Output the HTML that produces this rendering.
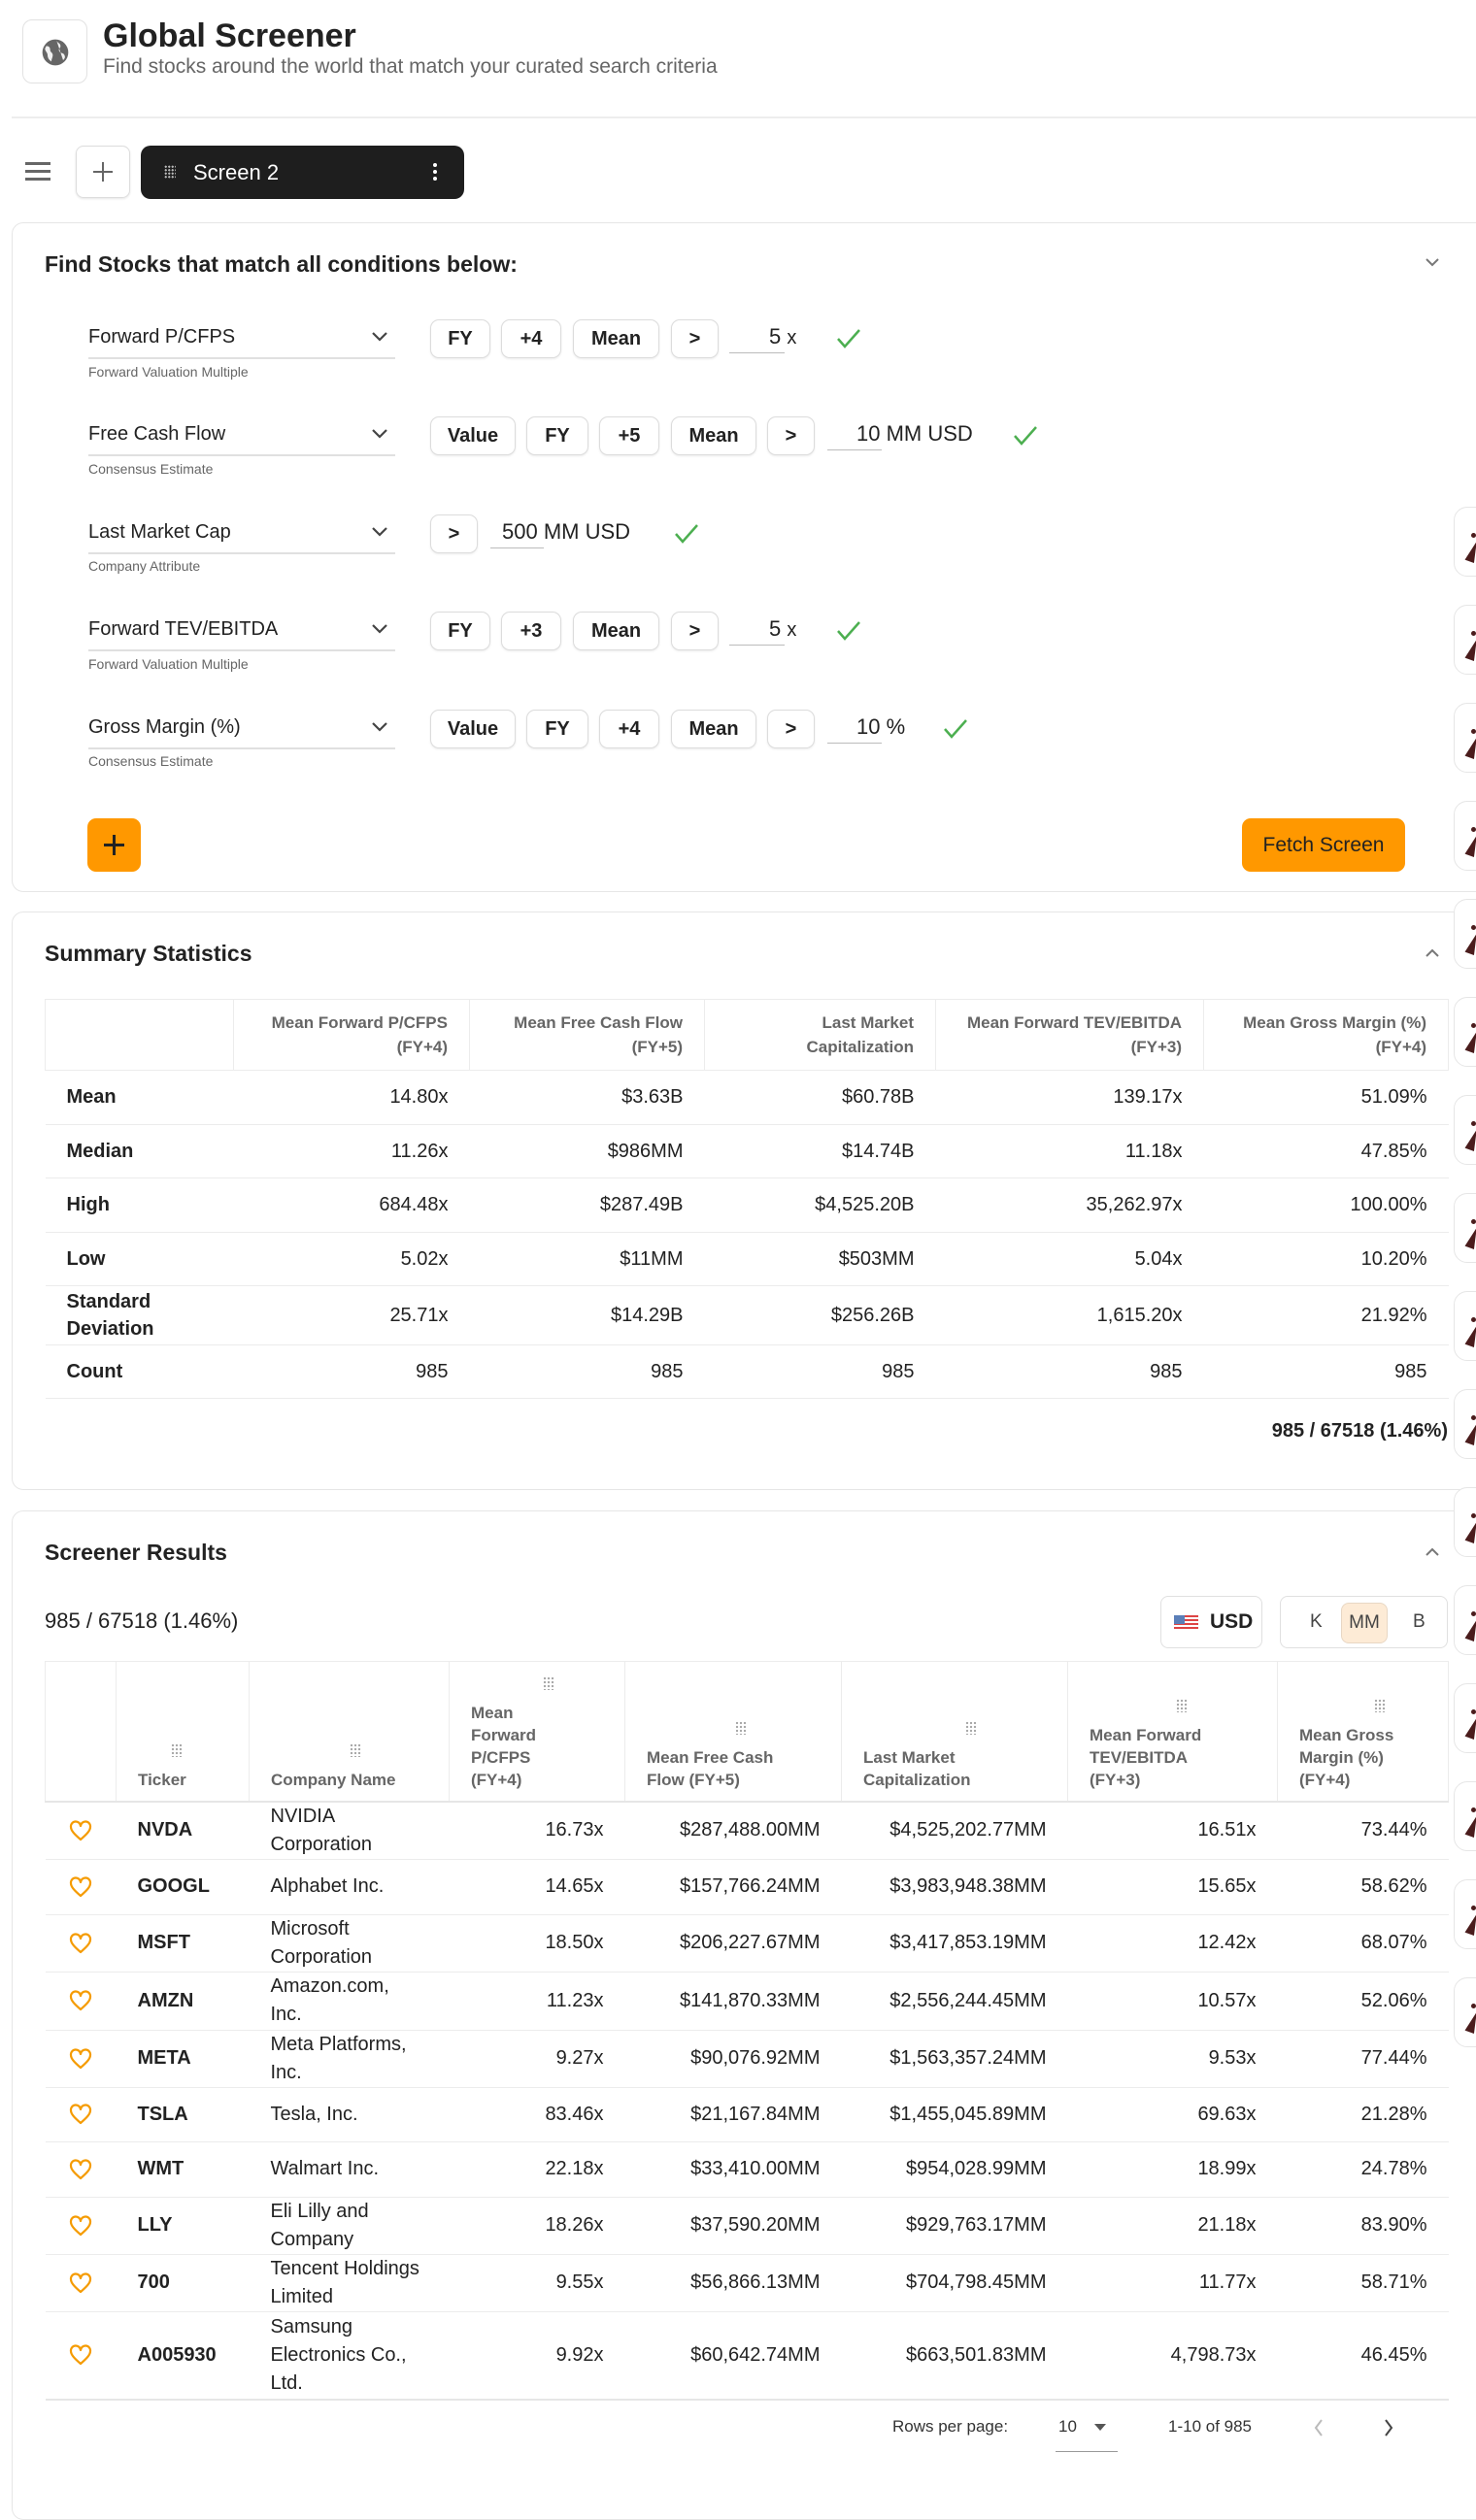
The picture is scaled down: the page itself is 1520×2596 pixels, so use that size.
<!DOCTYPE html>
<html><head><meta charset="utf-8">
<style>
*{box-sizing:border-box;margin:0;padding:0}
body{width:1520px;height:2560px;overflow:hidden;background:#fff;font-family:"Liberation Sans",Arial,sans-serif;color:#222;position:relative}
.a{position:absolute}
.card{position:absolute;left:12px;width:1540px;border:1px solid #e6e6e6;border-radius:12px;background:#fff}
.h2{position:absolute;left:46px;font-size:23px;font-weight:700;color:#222}
.chip{position:absolute;height:40px;line-height:38px;border:1px solid #dcdcdc;border-radius:9px;text-align:center;font-size:20px;font-weight:700;color:#222;background:#fff;box-shadow:0 1px 2px rgba(0,0,0,.08)}
.sel{position:absolute;left:91px;width:316px;border-bottom:2px solid #e0e0e0;height:34px;font-size:20px;color:#222}
.sel svg{position:absolute;right:6px;top:4px}
.cap{position:absolute;left:91px;font-size:14px;color:#666}
.ul{position:absolute;border-bottom:1px solid #bbb}
.val{position:absolute;font-size:22px;color:#222}
.chk{position:absolute}
table{border-collapse:collapse;position:absolute;table-layout:fixed}
.st td{font-size:20px;text-align:right;padding-right:22px;border-top:1px solid #ececec;color:#222}
.st td:first-child{text-align:left;padding-left:22px;font-weight:700}
.st th{font-size:17px;color:#666;font-weight:700;text-align:right;padding-right:22px;line-height:25px;border-left:1px solid #ececec;vertical-align:middle}
.rt td{font-size:20px;text-align:right;padding-right:22px;border-top:1px solid #ececec;color:#222}
.rt th{font-size:17px;color:#666;font-weight:700;text-align:left;padding-left:22px;line-height:23px;border-left:1px solid #ececec;vertical-align:bottom;padding-bottom:10px;position:relative}
.rt th:first-child{border-left:none}
.rt td.t{text-align:left;padding-left:22px;font-weight:700}
.rt td.c{text-align:left;padding-left:22px;line-height:29px}
.rt td.h{text-align:center;padding:0}
.rt td.h svg{display:block;margin:0 auto}
.g{display:block;width:12px;height:14px;margin:0 0 12px 0;background-image:radial-gradient(#aaa 1.1px,transparent 1.3px);background-size:4px 4px}
.side{position:absolute;left:1497px;width:40px;height:72px;border:1px solid #e6e6e6;border-radius:14px;background:#fff}
.side:after{content:"";position:absolute;left:14px;top:34px;width:0;height:0;border-left:5px solid transparent;border-right:5px solid transparent;border-bottom:22px solid #4a1c1c;transform:rotate(20deg)}
.side:before{content:"";position:absolute;left:17px;top:26px;width:5px;height:5px;border-radius:50%;background:#4a1c1c}
</style></head><body>

<!-- header -->
<div class="a" style="left:23px;top:20px;width:67px;height:66px;border:1px solid #e2e2e2;border-radius:10px">
<svg class="a" style="left:17px;top:17px" width="32" height="32" viewBox="0 0 24 24"><circle cx="12" cy="12" r="10" fill="#666"/><path d="M5 7c2 0 3 1 3 3s2 2 2 4-1 3-1 5c-2-1-3-3-3-5S4 11 4 9zM13 3c1 2 3 2 3 4s-2 2-1 4 3 1 4 3 0 3-1 4" fill="#fff" opacity=".9"/></svg>
</div>
<div class="a" style="left:106px;top:18px;font-size:34px;font-weight:700;color:#222">Global Screener</div>
<div class="a" style="left:106px;top:57px;font-size:21px;color:#666">Find stocks around the world that match your curated search criteria</div>
<div class="a" style="left:12px;top:120px;width:1508px;height:2px;background:#ededed"></div>

<!-- toolbar -->
<div class="a" style="left:26px;top:167px;width:26px;height:3px;background:#666;box-shadow:0 8px 0 #666,0 16px 0 #666"></div>
<div class="a" style="left:78px;top:150px;width:56px;height:54px;border:1px solid #ddd;border-radius:8px;box-shadow:0 1px 2px rgba(0,0,0,.1)">
<div class="a" style="left:17px;top:25px;width:20px;height:2px;background:#666"></div><div class="a" style="left:26px;top:16px;width:2px;height:20px;background:#666"></div></div>
<div class="a" style="left:145px;top:150px;width:333px;height:55px;background:#1e1e1e;border-radius:10px">
<div class="a" style="left:24px;top:20px;width:12px;height:14px;background-image:radial-gradient(#bbb 1px,transparent 1.2px);background-size:3.5px 3.5px"></div>
<div class="a" style="left:54px;top:15px;font-size:22px;color:#fff">Screen 2</div>
<div class="a" style="left:301px;top:18px;width:4px;height:4px;border-radius:50%;background:#fff;box-shadow:0 7px 0 #fff,0 14px 0 #fff"></div>
</div>

<!-- card 1 -->
<div class="card" style="top:229px;height:690px"></div>
<div class="h2" style="top:259px">Find Stocks that match all conditions below:</div>
<svg class="a" style="left:1466px;top:264px" width="18" height="12" viewBox="0 0 18 12"><path d="M3 3l6 6 6-6" stroke="#777" stroke-width="2" fill="none"/></svg>

<!-- row1 -->
<div class="sel" style="top:336px">Forward P/CFPS<svg width="20" height="14"><path d="M3 3l7 7 7-7" stroke="#444" stroke-width="2.2" fill="none"/></svg></div>
<div class="cap" style="top:375px">Forward Valuation Multiple</div>
<div class="chip" style="left:443px;top:329px;width:62px">FY</div>
<div class="chip" style="left:516px;top:329px;width:62px">+4</div>
<div class="chip" style="left:590px;top:329px;width:89px">Mean</div>
<div class="chip" style="left:691px;top:329px;width:49px">&gt;</div>
<div class="ul" style="left:751px;top:363px;width:57px"></div>
<div class="val" style="left:792px;top:334px">5 <span style="font-size:20px">x</span></div>
<svg class="chk" style="left:861px;top:338px" width="26" height="22"><path d="M2 11l7 8L24 2" stroke="#4caf50" stroke-width="2.5" fill="none"/></svg>

<!-- row2 -->
<div class="sel" style="top:436px">Free Cash Flow<svg width="20" height="14"><path d="M3 3l7 7 7-7" stroke="#444" stroke-width="2.2" fill="none"/></svg></div>
<div class="cap" style="top:475px">Consensus Estimate</div>
<div class="chip" style="left:443px;top:429px;width:88px">Value</div>
<div class="chip" style="left:542px;top:429px;width:64px">FY</div>
<div class="chip" style="left:617px;top:429px;width:62px">+5</div>
<div class="chip" style="left:691px;top:429px;width:88px">Mean</div>
<div class="chip" style="left:790px;top:429px;width:49px">&gt;</div>
<div class="ul" style="left:852px;top:463px;width:56px"></div>
<div class="val" style="left:882px;top:434px">10 MM USD</div>
<svg class="chk" style="left:1043px;top:438px" width="26" height="22"><path d="M2 11l7 8L24 2" stroke="#4caf50" stroke-width="2.5" fill="none"/></svg>

<!-- row3 -->
<div class="sel" style="top:537px">Last Market Cap<svg width="20" height="14"><path d="M3 3l7 7 7-7" stroke="#444" stroke-width="2.2" fill="none"/></svg></div>
<div class="cap" style="top:575px">Company Attribute</div>
<div class="chip" style="left:443px;top:530px;width:49px">&gt;</div>
<div class="ul" style="left:505px;top:564px;width:55px"></div>
<div class="val" style="left:517px;top:535px">500 MM USD</div>
<svg class="chk" style="left:694px;top:539px" width="26" height="22"><path d="M2 11l7 8L24 2" stroke="#4caf50" stroke-width="2.5" fill="none"/></svg>

<!-- row4 -->
<div class="sel" style="top:637px">Forward TEV/EBITDA<svg width="20" height="14"><path d="M3 3l7 7 7-7" stroke="#444" stroke-width="2.2" fill="none"/></svg></div>
<div class="cap" style="top:676px">Forward Valuation Multiple</div>
<div class="chip" style="left:443px;top:630px;width:62px">FY</div>
<div class="chip" style="left:516px;top:630px;width:62px">+3</div>
<div class="chip" style="left:590px;top:630px;width:89px">Mean</div>
<div class="chip" style="left:691px;top:630px;width:49px">&gt;</div>
<div class="ul" style="left:751px;top:664px;width:57px"></div>
<div class="val" style="left:792px;top:635px">5 <span style="font-size:20px">x</span></div>
<svg class="chk" style="left:861px;top:639px" width="26" height="22"><path d="M2 11l7 8L24 2" stroke="#4caf50" stroke-width="2.5" fill="none"/></svg>

<!-- row5 -->
<div class="sel" style="top:738px">Gross Margin (%)<svg width="20" height="14"><path d="M3 3l7 7 7-7" stroke="#444" stroke-width="2.2" fill="none"/></svg></div>
<div class="cap" style="top:776px">Consensus Estimate</div>
<div class="chip" style="left:443px;top:731px;width:88px">Value</div>
<div class="chip" style="left:542px;top:731px;width:64px">FY</div>
<div class="chip" style="left:617px;top:731px;width:62px">+4</div>
<div class="chip" style="left:691px;top:731px;width:88px">Mean</div>
<div class="chip" style="left:790px;top:731px;width:49px">&gt;</div>
<div class="ul" style="left:852px;top:765px;width:56px"></div>
<div class="val" style="left:882px;top:736px">10 %</div>
<svg class="chk" style="left:971px;top:740px" width="26" height="22"><path d="M2 11l7 8L24 2" stroke="#4caf50" stroke-width="2.5" fill="none"/></svg>

<div class="a" style="left:90px;top:843px;width:55px;height:55px;background:#ff9800;border-radius:9px">
<div class="a" style="left:17px;top:26px;width:21px;height:3px;background:#222"></div><div class="a" style="left:26px;top:17px;width:3px;height:21px;background:#222"></div></div>
<div class="a" style="left:1279px;top:843px;width:168px;height:55px;background:#ff9800;border-radius:9px;font-size:21px;color:#222;text-align:center;line-height:55px">Fetch Screen</div>

<!-- card 2 -->
<div class="card" style="top:939px;height:596px"></div>
<div class="h2" style="top:969px">Summary Statistics</div>
<svg class="a" style="left:1466px;top:976px" width="18" height="12" viewBox="0 0 18 12"><path d="M3 9l6-6 6 6" stroke="#777" stroke-width="2" fill="none"/></svg>
<table class="st" style="left:46px;top:1029px;width:1445px">
<colgroup><col style="width:194px"><col style="width:243px"><col style="width:242px"><col style="width:238px"><col style="width:276px"><col style="width:252px"></colgroup>
<tr style="height:73px;border:1px solid #ececec"><th style="border-left:none"></th><th>Mean Forward P/CFPS<br>(FY+4)</th><th>Mean Free Cash Flow<br>(FY+5)</th><th>Last Market<br>Capitalization</th><th>Mean Forward TEV/EBITDA<br>(FY+3)</th><th>Mean Gross Margin (%)<br>(FY+4)</th></tr>
<tr style="height:56px"><td>Mean</td><td>14.80x</td><td>$3.63B</td><td>$60.78B</td><td>139.17x</td><td>51.09%</td></tr>
<tr style="height:55px"><td>Median</td><td>11.26x</td><td>$986MM</td><td>$14.74B</td><td>11.18x</td><td>47.85%</td></tr>
<tr style="height:56px"><td>High</td><td>684.48x</td><td>$287.49B</td><td>$4,525.20B</td><td>35,262.97x</td><td>100.00%</td></tr>
<tr style="height:55px"><td>Low</td><td>5.02x</td><td>$11MM</td><td>$503MM</td><td>5.04x</td><td>10.20%</td></tr>
<tr style="height:61px"><td style="line-height:28px">Standard<br>Deviation</td><td>25.71x</td><td>$14.29B</td><td>$256.26B</td><td>1,615.20x</td><td>21.92%</td></tr>
<tr style="height:55px;border-bottom:1px solid #ececec"><td>Count</td><td>985</td><td>985</td><td>985</td><td>985</td><td>985</td></tr>
</table>
<div class="a" style="right:29px;top:1463px;font-size:20px;font-weight:700;color:#222">985 / 67518 (1.46%)</div>

<!-- card 3 -->
<div class="card" style="top:1556px;height:1040px"></div>
<div class="h2" style="top:1586px">Screener Results</div>
<svg class="a" style="left:1466px;top:1593px" width="18" height="12" viewBox="0 0 18 12"><path d="M3 9l6-6 6 6" stroke="#777" stroke-width="2" fill="none"/></svg>
<div class="a" style="left:46px;top:1657px;font-size:22px;color:#222">985 / 67518 (1.46%)</div>
<div class="a" style="left:1195px;top:1644px;width:105px;height:54px;border:1px solid #e0e0e0;border-radius:8px">
<svg class="a" style="left:13px;top:19px" width="25" height="16"><rect width="25" height="16" fill="#fff"/><g fill="#d44"><rect y="0" width="25" height="2"/><rect y="4" width="25" height="2"/><rect y="8" width="25" height="2"/><rect y="12" width="25" height="2"/></g><rect width="11" height="9" fill="#5b7fb8"/></svg>
<div class="a" style="left:50px;top:14px;font-size:21px;font-weight:700">USD</div></div>
<div class="a" style="left:1318px;top:1644px;width:173px;height:54px;border:1px solid #e0e0e0;border-radius:8px">
<div class="a" style="left:30px;top:15px;font-size:19px;color:#444">K</div>
<div class="a" style="left:62px;top:6px;width:48px;height:42px;background:#fdebd6;border:1px solid #e8d7c4;border-radius:8px;font-size:19px;color:#444;text-align:center;line-height:40px">MM</div>
<div class="a" style="left:136px;top:15px;font-size:19px;color:#444">B</div></div>

<table class="rt" style="left:46px;top:1711px;width:1445px">
<colgroup><col style="width:73px"><col style="width:137px"><col style="width:206px"><col style="width:181px"><col style="width:223px"><col style="width:233px"><col style="width:216px"><col style="width:176px"></colgroup>
<tr style="height:144px;border:1px solid #ececec;border-bottom:2px solid #e6e6e6"><th></th>
<th><i class="g" style="margin-left:34px"></i>Ticker</th>
<th><i class="g" style="margin-left:81px"></i>Company Name</th>
<th><i class="g" style="margin-left:74px"></i>Mean<br>Forward<br>P/CFPS<br>(FY+4)</th>
<th><i class="g" style="margin-left:91px"></i>Mean Free Cash<br>Flow (FY+5)</th>
<th><i class="g" style="margin-left:105px"></i>Last Market<br>Capitalization</th>
<th><i class="g" style="margin-left:89px"></i>Mean Forward<br>TEV/EBITDA<br>(FY+3)</th>
<th><i class="g" style="margin-left:77px"></i>Mean Gross<br>Margin (%)<br>(FY+4)</th></tr>
<tr style="height:59px"><td class="h"><svg width="24" height="22" viewBox="0 0 24 22"><path d="M12 20C5 14 2 10.5 2 7a5 5 0 0 1 10-1 5 5 0 0 1 10 1c0 3.5-3 7-10 13z" fill="none" stroke="#f59b00" stroke-width="2.2" stroke-linejoin="round"/></svg></td><td class="t">NVDA</td><td class="c">NVIDIA<br>Corporation</td><td>16.73x</td><td>$287,488.00MM</td><td>$4,525,202.77MM</td><td>16.51x</td><td>73.44%</td></tr>
<tr style="height:57px"><td class="h"><svg width="24" height="22" viewBox="0 0 24 22"><path d="M12 20C5 14 2 10.5 2 7a5 5 0 0 1 10-1 5 5 0 0 1 10 1c0 3.5-3 7-10 13z" fill="none" stroke="#f59b00" stroke-width="2.2" stroke-linejoin="round"/></svg></td><td class="t">GOOGL</td><td class="c">Alphabet Inc.</td><td>14.65x</td><td>$157,766.24MM</td><td>$3,983,948.38MM</td><td>15.65x</td><td>58.62%</td></tr>
<tr style="height:59px"><td class="h"><svg width="24" height="22" viewBox="0 0 24 22"><path d="M12 20C5 14 2 10.5 2 7a5 5 0 0 1 10-1 5 5 0 0 1 10 1c0 3.5-3 7-10 13z" fill="none" stroke="#f59b00" stroke-width="2.2" stroke-linejoin="round"/></svg></td><td class="t">MSFT</td><td class="c">Microsoft<br>Corporation</td><td>18.50x</td><td>$206,227.67MM</td><td>$3,417,853.19MM</td><td>12.42x</td><td>68.07%</td></tr>
<tr style="height:60px"><td class="h"><svg width="24" height="22" viewBox="0 0 24 22"><path d="M12 20C5 14 2 10.5 2 7a5 5 0 0 1 10-1 5 5 0 0 1 10 1c0 3.5-3 7-10 13z" fill="none" stroke="#f59b00" stroke-width="2.2" stroke-linejoin="round"/></svg></td><td class="t">AMZN</td><td class="c">Amazon.com,<br>Inc.</td><td>11.23x</td><td>$141,870.33MM</td><td>$2,556,244.45MM</td><td>10.57x</td><td>52.06%</td></tr>
<tr style="height:59px"><td class="h"><svg width="24" height="22" viewBox="0 0 24 22"><path d="M12 20C5 14 2 10.5 2 7a5 5 0 0 1 10-1 5 5 0 0 1 10 1c0 3.5-3 7-10 13z" fill="none" stroke="#f59b00" stroke-width="2.2" stroke-linejoin="round"/></svg></td><td class="t">META</td><td class="c">Meta Platforms,<br>Inc.</td><td>9.27x</td><td>$90,076.92MM</td><td>$1,563,357.24MM</td><td>9.53x</td><td>77.44%</td></tr>
<tr style="height:56px"><td class="h"><svg width="24" height="22" viewBox="0 0 24 22"><path d="M12 20C5 14 2 10.5 2 7a5 5 0 0 1 10-1 5 5 0 0 1 10 1c0 3.5-3 7-10 13z" fill="none" stroke="#f59b00" stroke-width="2.2" stroke-linejoin="round"/></svg></td><td class="t">TSLA</td><td class="c">Tesla, Inc.</td><td>83.46x</td><td>$21,167.84MM</td><td>$1,455,045.89MM</td><td>69.63x</td><td>21.28%</td></tr>
<tr style="height:57px"><td class="h"><svg width="24" height="22" viewBox="0 0 24 22"><path d="M12 20C5 14 2 10.5 2 7a5 5 0 0 1 10-1 5 5 0 0 1 10 1c0 3.5-3 7-10 13z" fill="none" stroke="#f59b00" stroke-width="2.2" stroke-linejoin="round"/></svg></td><td class="t">WMT</td><td class="c">Walmart Inc.</td><td>22.18x</td><td>$33,410.00MM</td><td>$954,028.99MM</td><td>18.99x</td><td>24.78%</td></tr>
<tr style="height:57px"><td class="h"><svg width="24" height="22" viewBox="0 0 24 22"><path d="M12 20C5 14 2 10.5 2 7a5 5 0 0 1 10-1 5 5 0 0 1 10 1c0 3.5-3 7-10 13z" fill="none" stroke="#f59b00" stroke-width="2.2" stroke-linejoin="round"/></svg></td><td class="t">LLY</td><td class="c">Eli Lilly and<br>Company</td><td>18.26x</td><td>$37,590.20MM</td><td>$929,763.17MM</td><td>21.18x</td><td>83.90%</td></tr>
<tr style="height:59px"><td class="h"><svg width="24" height="22" viewBox="0 0 24 22"><path d="M12 20C5 14 2 10.5 2 7a5 5 0 0 1 10-1 5 5 0 0 1 10 1c0 3.5-3 7-10 13z" fill="none" stroke="#f59b00" stroke-width="2.2" stroke-linejoin="round"/></svg></td><td class="t">700</td><td class="c">Tencent Holdings<br>Limited</td><td>9.55x</td><td>$56,866.13MM</td><td>$704,798.45MM</td><td>11.77x</td><td>58.71%</td></tr>
<tr style="height:91px;border-bottom:2px solid #e6e6e6"><td class="h"><svg width="24" height="22" viewBox="0 0 24 22"><path d="M12 20C5 14 2 10.5 2 7a5 5 0 0 1 10-1 5 5 0 0 1 10 1c0 3.5-3 7-10 13z" fill="none" stroke="#f59b00" stroke-width="2.2" stroke-linejoin="round"/></svg></td><td class="t">A005930</td><td class="c">Samsung<br>Electronics Co.,<br>Ltd.</td><td>9.92x</td><td>$60,642.74MM</td><td>$663,501.83MM</td><td>4,798.73x</td><td>46.45%</td></tr>
</table>

<div class="a" style="left:919px;top:2490px;font-size:17px;color:#333">Rows per page:</div>
<div class="a" style="left:1090px;top:2490px;font-size:17px;color:#333">10</div>
<div class="a" style="left:1127px;top:2497px;width:0;height:0;border-left:6px solid transparent;border-right:6px solid transparent;border-top:7px solid #555"></div>
<div class="a" style="left:1087px;top:2525px;width:64px;height:1px;background:#999"></div>
<div class="a" style="left:1203px;top:2490px;font-size:17px;color:#333">1-10 of 985</div>
<svg class="a" style="left:1352px;top:2491px" width="12" height="20"><path d="M9 2L3 10l6 8" stroke="#bbb" stroke-width="2" fill="none"/></svg>
<svg class="a" style="left:1424px;top:2491px" width="12" height="20"><path d="M3 2l6 8-6 8" stroke="#444" stroke-width="2" fill="none"/></svg>

<!-- right floating cards -->
<div class="side" style="top:522px"></div>
<div class="side" style="top:623px"></div>
<div class="side" style="top:724px"></div>
<div class="side" style="top:825px"></div>
<div class="side" style="top:926px"></div>
<div class="side" style="top:1027px"></div>
<div class="side" style="top:1128px"></div>
<div class="side" style="top:1229px"></div>
<div class="side" style="top:1330px"></div>
<div class="side" style="top:1431px"></div>
<div class="side" style="top:1532px"></div>
<div class="side" style="top:1633px"></div>
<div class="side" style="top:1734px"></div>
<div class="side" style="top:1835px"></div>
<div class="side" style="top:1936px"></div>
<div class="side" style="top:2037px"></div>

</body></html>
